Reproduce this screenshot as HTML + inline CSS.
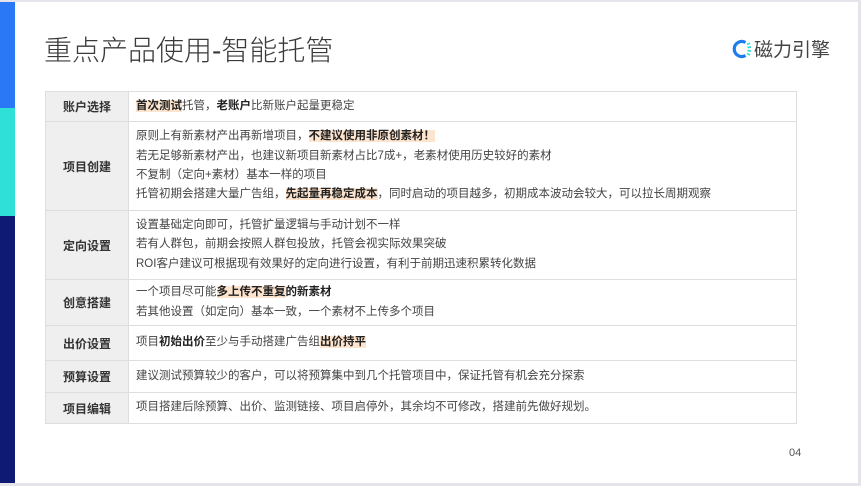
<!DOCTYPE html>
<html><head><meta charset="utf-8"><style>
*{margin:0;padding:0;box-sizing:border-box}
body{width:861px;height:486px;background:#e4e4ea;position:relative;overflow:hidden;font-family:"Liberation Sans","Noto Sans CJK SC",sans-serif;color:#333}
.slide{position:absolute;left:0;top:2px;width:858px;height:481px;background:#fff}
.bar{position:absolute;left:0;width:15px}
h1{position:absolute;left:44px;top:27px;font-size:28px;font-weight:300;color:#3a3a3a;letter-spacing:0px}
.logo{position:absolute;left:731px;top:33px;font-size:19px;color:#444;display:flex;align-items:center}
table{position:absolute;left:45px;top:89px;width:752px;border-collapse:collapse;font-size:11.5px}
td{border:1px solid #dedede;vertical-align:middle}
td.l{width:83px;background:#efefef;text-align:center;font-weight:bold;color:#333;font-size:12px}
td.c{padding:3px 7px;line-height:19.3px;color:#444}
b{font-weight:bold;color:#222}
.h{background:#fde4cf}
.pg{position:absolute;left:789px;top:445px;font-size:11px;color:#555}
</style></head><body>
<div class="slide">
<div class="bar" style="top:0;height:106px;background:#2a78f5"></div>
<div class="bar" style="top:106px;height:108px;background:#2ee0d8"></div>
<div class="bar" style="top:214px;height:267px;background:#0f1a74"></div>
<h1>重点产品使用-智能托管</h1>
<div class="logo"><svg width="22" height="22" viewBox="0 0 22 22"><path d="M14.5 4.5A7.5 7.5 0 1 0 14.5 17.5" fill="none" stroke="#1f7cf0" stroke-width="3.2"/><g stroke="#2ee0d8" stroke-width="1.8"><line x1="16" y1="6.5" x2="19" y2="5"/><line x1="16.5" y1="9.5" x2="20" y2="9"/><line x1="16.5" y1="12.5" x2="20" y2="13"/><line x1="16" y1="15.5" x2="19" y2="17"/></g></svg><span style="margin-left:1px">磁力引擎</span></div>
<table>
<tr style="height:30px"><td class="l">账户选择</td><td class="c"><b class="h">首次测试</b>托管，<b>老账户</b>比新账户起量更稳定</td></tr>
<tr style="height:89px"><td class="l">项目创建</td><td class="c">原则上有新素材产出再新增项目，<b class="h">不建议使用非原创素材！</b><br>若无足够新素材产出，也建议新项目新素材占比7成+，老素材使用历史较好的素材<br>不复制（定向+素材）基本一样的项目<br>托管初期会搭建大量广告组，<b class="h">先起量再稳定成本</b>，同时启动的项目越多，初期成本波动会较大，可以拉长周期观察</td></tr>
<tr style="height:69px"><td class="l">定向设置</td><td class="c">设置基础定向即可，托管扩量逻辑与手动计划不一样<br>若有人群包，前期会按照人群包投放，托管会视实际效果突破<br>ROI客户建议可根据现有效果好的定向进行设置，有利于前期迅速积累转化数据</td></tr>
<tr style="height:46px"><td class="l">创意搭建</td><td class="c">一个项目尽可能<b class="h">多上传不重复</b><b>的新素材</b><br>若其他设置（如定向）基本一致，一个素材不上传多个项目</td></tr>
<tr style="height:35px"><td class="l">出价设置</td><td class="c">项目<b>初始出价</b>至少与手动搭建广告组<b class="h">出价持平</b></td></tr>
<tr style="height:32px"><td class="l">预算设置</td><td class="c">建议测试预算较少的客户，可以将预算集中到几个托管项目中，保证托管有机会充分探索</td></tr>
<tr style="height:31px"><td class="l">项目编辑</td><td class="c">项目搭建后除预算、出价、监测链接、项目启停外，其余均不可修改，搭建前先做好规划。</td></tr>
</table>
<div class="pg">04</div>
</div>
</body></html>
